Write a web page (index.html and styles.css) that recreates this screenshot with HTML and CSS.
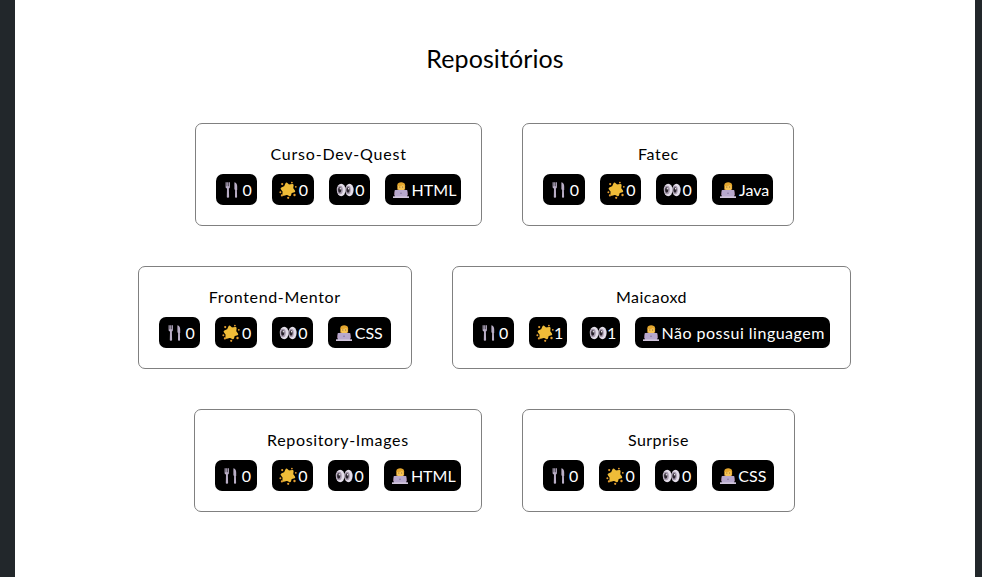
FILE: index.html
```
<!DOCTYPE html>
<html lang="pt-BR">
<head>
<meta charset="utf-8">
<title>Repositórios</title>
<link rel="stylesheet" href="styles.css">
</head>
<body>
<svg class="sprite" aria-hidden="true">
  <symbol id="fork" viewBox="0 0 18 18"><path fill="#b9aec6" d="M2.6 1.2h1.1v4h.5v-4h1.1v4h.5v-4h1.1v4.5c0 1-.4 1.5-1 1.8l.2 8.4c0 1.1-2.3 1.1-2.3 0L4 7.5c-.9-.3-1.4-.8-1.4-1.8zM11.4 1.3c2 .3 2.8 2 2.8 4.3v3.4h-.3l.2 7c0 1.1-2.1 1.1-2.1 0l.1-7.1-.7-.6z"/></symbol>
  <symbol id="star" viewBox="0 0 18 18"><path fill="#efbc38" stroke="#efbc38" stroke-width="2.4" stroke-linejoin="round" d="M7.6 2.8l2.2 2 3.6-.6-.4 3.4 2 2.6-3.2 1-1 2.8-2.6-1.4-3.6 1 .2-3.4-2-2.6 3.2-1.4z"/><g fill="#e59e31"><circle cx="3.2" cy="3.1" r="1.1"/><circle cx="12.9" cy="1.6" r=".9"/><circle cx="1.4" cy="11.3" r="1"/><circle cx="2.9" cy="14.4" r="1.1"/><circle cx="16.8" cy="5.8" r=".9"/><circle cx="15.5" cy="14" r="1.2"/><circle cx="9.2" cy="16.8" r="1.1"/></g></symbol>
  <symbol id="eyes" viewBox="0 0 18 18"><g fill="#e3dde9"><ellipse cx="5.2" cy="9" rx="4.4" ry="6.2"/><ellipse cx="13.5" cy="9" rx="4.1" ry="6.2"/></g><g fill="#a79bae"><ellipse cx="4" cy="9" rx="2.8" ry="4.2"/><ellipse cx="12.2" cy="9" rx="2.6" ry="4.2"/></g><g fill="#29232c"><ellipse cx="3.7" cy="9" rx="1.6" ry="2.7"/><ellipse cx="12" cy="9" rx="1.6" ry="2.7"/></g><circle cx="4.3" cy="7.8" r=".7" fill="#fff"/><circle cx="12.5" cy="7.8" r=".7" fill="#fff"/></symbol>
  <symbol id="dev" viewBox="0 0 18 18"><path fill="#80546c" d="M2 14c0-3.4 1.4-5 4-5.4h6c2.6.4 4 2 4 5.4z"/><path fill="#e4a62e" d="M5.3 8.5V4.2c0-3.8 7.8-3.8 7.8 0v4.3z"/><path fill="#f6c455" d="M6 5c2.6.2 4-.4 5-1.2l1.4 1.5v2.2c0 3.4-6.4 3.4-6.4 0z"/><circle cx="7.8" cy="6.1" r=".5" fill="#6b4c32"/><circle cx="10.7" cy="6.1" r=".5" fill="#6b4c32"/><rect x="2.6" y="9" width="12.8" height="7" rx=".8" fill="#b7a8cd"/><path fill="#d0c4dc" d="M1 15.3h16V17H1z"/><circle cx="9" cy="12.3" r=".8" fill="#83749e"/></symbol>
</svg>
<main class="page">
  <h1 class="heading">Repositórios</h1>
  <section class="repositories">
    <article class="card">
      <h2 class="name wide">Curso-Dev-Quest</h2>
      <div class="badges">
        <span class="badge"><svg><use href="#fork"/></svg>0</span>
        <span class="badge"><svg><use href="#star"/></svg>0</span>
        <span class="badge"><svg><use href="#eyes"/></svg>0</span>
        <span class="badge html"><svg><use href="#dev"/></svg>HTML</span>
      </div>
    </article>
    <article class="card">
      <h2 class="name">Fatec</h2>
      <div class="badges">
        <span class="badge"><svg><use href="#fork"/></svg>0</span>
        <span class="badge"><svg><use href="#star"/></svg>0</span>
        <span class="badge"><svg><use href="#eyes"/></svg>0</span>
        <span class="badge java"><svg><use href="#dev"/></svg>Java</span>
      </div>
    </article>
    <article class="card">
      <h2 class="name">Frontend-Mentor</h2>
      <div class="badges">
        <span class="badge"><svg><use href="#fork"/></svg>0</span>
        <span class="badge"><svg><use href="#star"/></svg>0</span>
        <span class="badge"><svg><use href="#eyes"/></svg>0</span>
        <span class="badge css"><svg><use href="#dev"/></svg>CSS</span>
      </div>
    </article>
    <article class="card">
      <h2 class="name snug">Maicaoxd</h2>
      <div class="badges">
        <span class="badge"><svg><use href="#fork"/></svg>0</span>
        <span class="badge one"><svg><use href="#star"/></svg>1</span>
        <span class="badge one"><svg><use href="#eyes"/></svg>1</span>
        <span class="badge none"><svg><use href="#dev"/></svg>Não possui linguagem</span>
      </div>
    </article>
    <article class="card">
      <h2 class="name">Repository-Images</h2>
      <div class="badges">
        <span class="badge"><svg><use href="#fork"/></svg>0</span>
        <span class="badge"><svg><use href="#star"/></svg>0</span>
        <span class="badge"><svg><use href="#eyes"/></svg>0</span>
        <span class="badge html"><svg><use href="#dev"/></svg>HTML</span>
      </div>
    </article>
    <article class="card">
      <h2 class="name snug">Surprise</h2>
      <div class="badges">
        <span class="badge"><svg><use href="#fork"/></svg>0</span>
        <span class="badge"><svg><use href="#star"/></svg>0</span>
        <span class="badge"><svg><use href="#eyes"/></svg>0</span>
        <span class="badge css"><svg><use href="#dev"/></svg>CSS</span>
      </div>
    </article>
  </section>
</main>
</body>
</html>
```
FILE: styles.css
```
* { box-sizing: border-box; margin: 0; padding: 0; }
body {
  background: #22272b;
  font-family: Lato, "Open Sans", sans-serif;
  font-size: 16px;
  color: #000;
  overflow: hidden;
}
.sprite { display: none; }
.page {
  width: 960px;
  height: 577px;
  margin-left: 15px;
  padding-top: 43px;
  background: #fff;
}
.heading {
  height: 30px;
  line-height: 30px;
  margin-bottom: 50px;
  text-align: center;
  font-size: 25px;
  font-weight: 400;
  letter-spacing: .1px;
}
.repositories {
  display: flex;
  flex-wrap: wrap;
  justify-content: center;
  gap: 40px;
  padding: 0 100.6px 0 100px;
}
.card {
  height: 103px;
  padding: 20px;
  border: 1px solid #808080;
  border-radius: 7px;
}
.name {
  height: 20px;
  line-height: 20px;
  margin-bottom: 10px;
  text-align: center;
  font-size: 16px;
  font-weight: 400;
  letter-spacing: .65px;
}
.wide { letter-spacing: .8px; }
.snug { letter-spacing: .45px; }
.badges { display: flex; gap: 15px; }
.badge {
  display: flex;
  align-items: center;
  width: 41.4px;
  height: 31px;
  padding-left: 7px;
  border-radius: 7px;
  background: #000;
  color: #fff;
  white-space: nowrap;
}
.badge svg { flex: none; width: 18px; height: 18px; margin-right: 1.5px; }
.html { width: 76.2px; }
.java { width: 61px; }
.css { width: 62.4px; }
.one { width: 38px; }
.one svg { margin-right: 0; }
.none { width: 195.4px; letter-spacing: .5px; }
```
